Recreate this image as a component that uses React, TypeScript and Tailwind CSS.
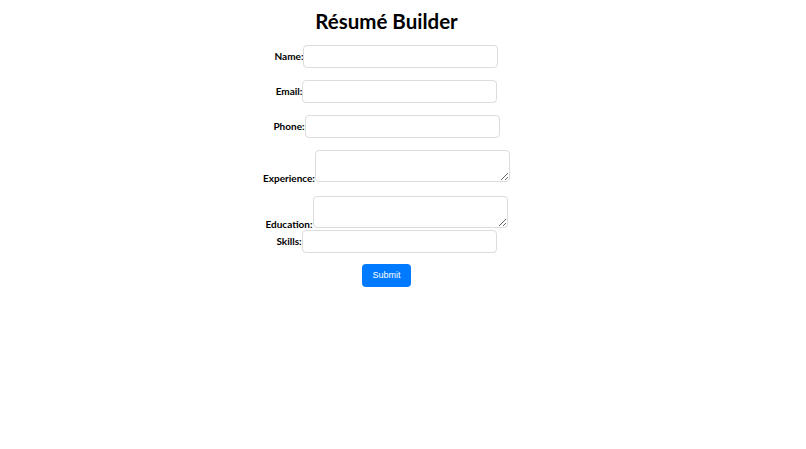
import React from 'react';

const labelCls = "font-bold text-[10px] text-black leading-none";
const inputCls = "w-[195px] h-[23px] border border-[#dcdcdc] rounded-[4px] bg-white px-1 text-[12px] outline-none";
const areaCls = "w-[195px] h-[32px] border border-[#dcdcdc] rounded-[4px] bg-white px-1 text-[12px] outline-none block";

const InputRow: React.FC<{ label: string; type?: string; className?: string }> = ({ label, type = 'text', className = '' }) => (
  <div className={`flex items-center justify-center ${className}`}>
    <label className={`${labelCls} mb-[2px]`}>{label}</label>
    <input type={type} className={inputCls} />
  </div>
);

const AreaRow: React.FC<{ label: string; className?: string }> = ({ label, className = '' }) => (
  <div className={`flex items-end justify-center ${className}`}>
    <label className={`${labelCls} mb-[-1px]`}>{label}</label>
    <textarea className={areaCls} />
  </div>
);

export default function App() {
  return (
    <div className="w-[773px] bg-white text-center" style={{ fontFamily: 'Lato, "Open Sans", sans-serif' }}>
      <h1 className="pt-[8px] text-[20.5px] font-bold leading-[26px] text-black">Résumé Builder</h1>
      <form className="mt-[11px]" onSubmit={(e) => e.preventDefault()}>
        <InputRow label="Name:" />
        <InputRow label="Email:" type="email" className="mt-[12px]" />
        <InputRow label="Phone:" type="tel" className="mt-[12px]" />
        <AreaRow label="Experience:" className="mt-[12px]" />
        <AreaRow label="Education:" className="mt-[14px]" />
        <InputRow label="Skills:" className="mt-[2px]" />
        <div className="mt-[11px] flex justify-center">
          <button
            type="submit"
            className="w-[49px] h-[23px] rounded-[4px] bg-[#007bff] text-white text-[9px]"
            style={{ fontFamily: '"Liberation Sans", Arial, sans-serif' }}
          >
            Submit
          </button>
        </div>
      </form>
    </div>
  );
}
